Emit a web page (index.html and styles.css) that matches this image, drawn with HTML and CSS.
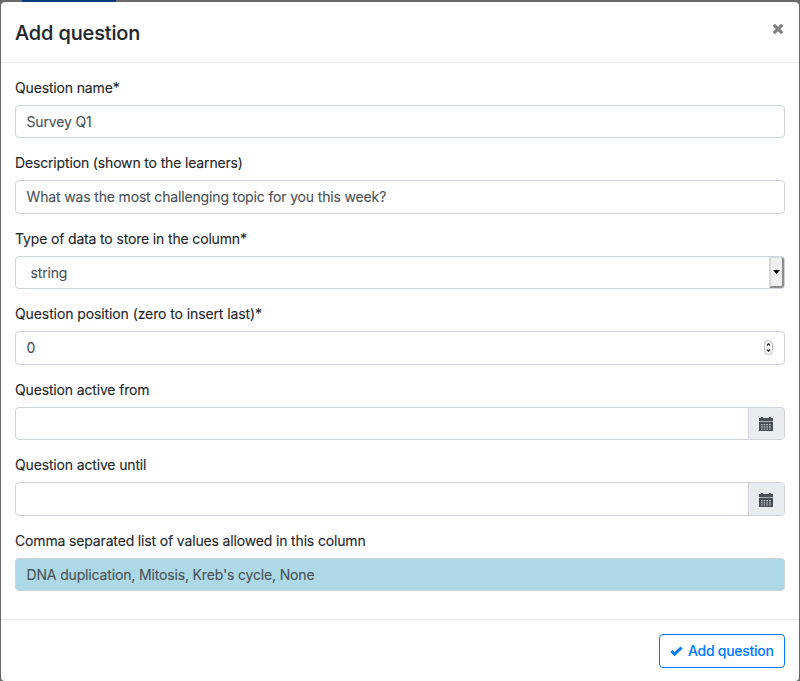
FILE: index.html
```html
<!DOCTYPE html>
<html lang="en">
<head>
<meta charset="utf-8">
<title>Add question</title>
<link rel="stylesheet" href="styles.css">
</head>
<body>
<svg class="defs" width="0" height="0" aria-hidden="true">
  <symbol id="calendar" viewBox="0 0 14 14">
    <path fill="#495057" d="M2 0h2v1h6V0h2v1h2v3H0V1h2z"/>
    <path fill="#adb3b8" d="M0 4h14v1H0z"/>
    <path fill="#495057" d="M0 5h14v9H0z"/>
    <path fill="#c5cacf" d="M2 7h1.5v1.3H2zM4.7 7h1.5v1.3H4.7zM7.4 7h1.5v1.3H7.4zM10.1 7h1.6v1.3h-1.6zM2 9.2h1.5v1.3H2zM4.7 9.2h1.5v1.3H4.7zM7.4 9.2h1.5v1.3H7.4zM10.1 9.2h1.6v1.3h-1.6zM2 11.4h1.5v1.2H2zM4.7 11.4h1.5v1.2H4.7zM7.4 11.4h1.5v1.2H7.4zM10.1 11.4h1.6v1.2h-1.6z"/>
  </symbol>
</svg>
<div class="tab"></div>
<main class="modal">
  <header class="header">
    <h1 class="title">Add question</h1>
    <svg class="close" width="12" height="12" viewBox="0 0 12 12"><path d="M1.8 1.8l8.4 8.4M10.2 1.8L1.8 10.2"/></svg>
  </header>
  <form class="body">
    <div class="group"><div class="label">Question name*</div><div class="control">Survey Q1</div></div>
    <div class="group"><div class="label">Description (shown to the learners)</div><div class="control raised">What was the most challenging topic for you this week?</div></div>
    <div class="group"><div class="label">Type of data to store in the column*</div>
      <div class="control select"><span>string</span><span class="arrow"><svg width="7" height="4" viewBox="0 0 7 4"><path d="M0 0h7L3.5 4z"/></svg></span></div></div>
    <div class="group"><div class="label wide">Question position (zero to insert last)*</div>
      <div class="control number raised"><span>0</span><svg class="spin" width="9" height="15" viewBox="0 0 9 15"><rect x=".5" y=".5" width="8" height="14" rx="4"/><path d="M2.9 5.5l1.6-1.8 1.6 1.8M2.9 9.5l1.6 1.8 1.6-1.8"/></svg></div></div>
    <div class="group"><div class="label">Question active from</div>
      <div class="control date"><span class="addon"><svg width="14" height="14"><use href="#calendar"/></svg></span></div></div>
    <div class="group"><div class="label">Question active until</div>
      <div class="control date"><span class="addon low"><svg width="14" height="14"><use href="#calendar"/></svg></span></div></div>
    <div class="group"><div class="label">Comma separated list of values allowed in this column</div><div class="control filled">DNA duplication, Mitosis, Kreb's cycle, None</div></div>
  </form>
  <footer class="footer">
    <button class="submit" type="button"><svg width="13" height="10" viewBox="0 0 13 10"><path d="M1.3 5l3.3 3.2 7-6.7"/></svg><span>Add question</span></button>
  </footer>
</main>
</body>
</html>
```
FILE: styles.css
```css
* { box-sizing: border-box; }
html, body { height: 100%; }
body {
  margin: 0;
  overflow: hidden;
  background: #69696a;
  color: #212529;
  font-family: Inter, sans-serif;
  font-size: 14px;
  letter-spacing: -0.155px;
  -webkit-text-stroke: 0.1px;
}
.defs { position: absolute; }
.tab { width: 94px; height: 2px; margin-left: 22px; background: #003b82; }
.modal {
  height: 679px;
  margin: 0 1px;
  background: #fff;
  border-radius: 4px;
}
.header {
  display: flex;
  justify-content: space-between;
  height: 61px;
  padding: 15px 15px 0 14px;
  border-bottom: 1px solid #e9ecef;
}
.title { margin: 0; font-size: 20px; font-weight: 500; line-height: 32px; }
.close { margin-top: 6px; fill: none; stroke: #7f7f7f; stroke-width: 3.1; }
.body { height: 556px; padding: 14px 14px 0; }
.group { height: 75.45px; }
.label { height: 28px; line-height: 22px; white-space: nowrap; }
.wide { letter-spacing: -0.1px; }
.control {
  display: flex;
  align-items: center;
  height: 33.4px;
  padding: 0 10.5px;
  border: 1px solid #ced4da;
  border-radius: 4px;
  color: #495057;
  white-space: nowrap;
}
.raised { padding-bottom: 1.5px; }
.select { justify-content: space-between; padding: 0 0 0 14.5px; }
.arrow {
  display: flex;
  align-items: center;
  justify-content: center;
  width: 15px;
  height: 31px;
  background: #efefef;
  border: 2px solid #d9d9d9;
  border-right-color: #8c8c8c;
  border-bottom-color: #8c8c8c;
  border-top-width: 1px;
  border-radius: 0 3px 3px 0;
}
.number { justify-content: space-between; padding-right: 11px; }
.spin { fill: #fff; stroke: #b8b8b8; }
.spin path { fill: none; stroke: #333; stroke-width: 1.3; }
.date { justify-content: flex-end; padding: 0; }
.addon {
  display: flex;
  align-items: center;
  justify-content: center;
  width: 36px;
  height: 100%;
  padding: 1px 1px 0 0;
  background: #e9ecef;
  border-left: 1px solid #ced4da;
  border-radius: 0 3px 3px 0;
}
.low { padding-top: 3px; }
.filled { background: #add8e6; }
.footer {
  display: flex;
  justify-content: flex-end;
  height: 62px;
  padding: 14px 14px 0;
  border-top: 1px solid #e9ecef;
}
.submit {
  display: flex;
  align-items: center;
  gap: 5px;
  width: 126px;
  height: 34px;
  padding: 0 10px;
  border: 1px solid #007bff;
  border-radius: 4px;
  background: #fff;
  color: #007bff;
  font: 500 14px/22px Inter, sans-serif;
  letter-spacing: -0.27px;
  white-space: nowrap;
}
.submit svg { flex: none; fill: none; stroke: #007bff; stroke-width: 3; }
```
